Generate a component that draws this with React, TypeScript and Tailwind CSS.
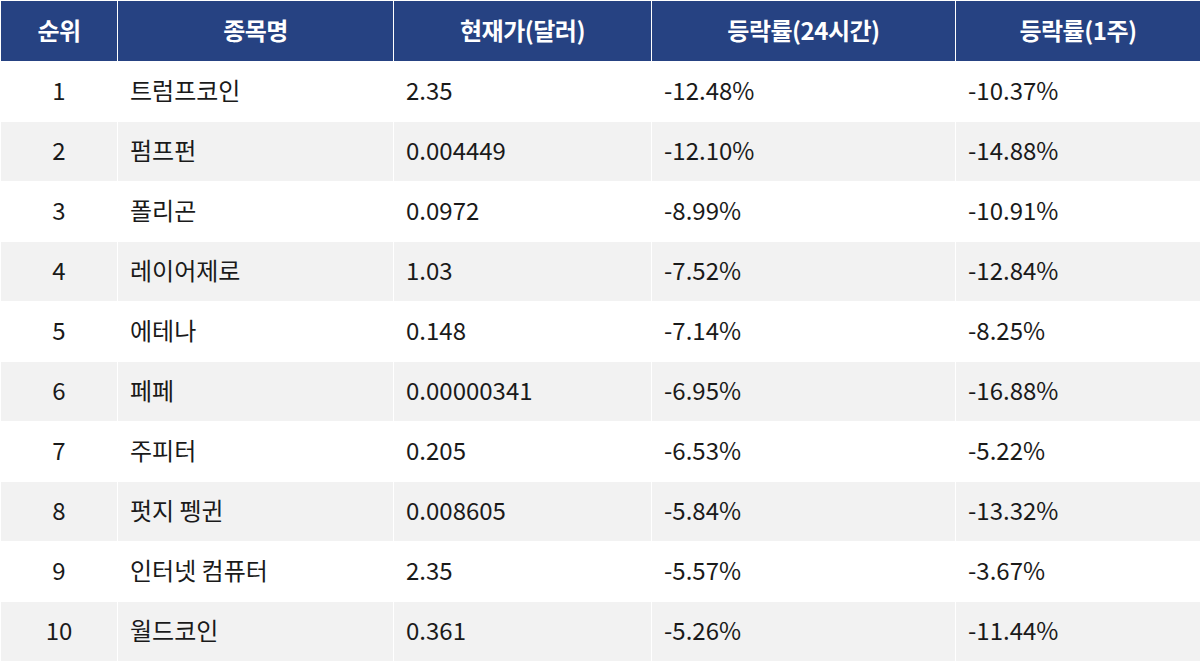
const rows = [
  { rank: 1, name: '트럼프코인', price: '2.35', d24: '-12.48%', w1: '-10.37%' },
  { rank: 2, name: '펌프펀', price: '0.004449', d24: '-12.10%', w1: '-14.88%' },
  { rank: 3, name: '폴리곤', price: '0.0972', d24: '-8.99%', w1: '-10.91%' },
  { rank: 4, name: '레이어제로', price: '1.03', d24: '-7.52%', w1: '-12.84%' },
  { rank: 5, name: '에테나', price: '0.148', d24: '-7.14%', w1: '-8.25%' },
  { rank: 6, name: '페페', price: '0.00000341', d24: '-6.95%', w1: '-16.88%' },
  { rank: 7, name: '주피터', price: '0.205', d24: '-6.53%', w1: '-5.22%' },
  { rank: 8, name: '펏지 펭귄', price: '0.008605', d24: '-5.84%', w1: '-13.32%' },
  { rank: 9, name: '인터넷 컴퓨터', price: '2.35', d24: '-5.57%', w1: '-3.67%' },
  { rank: 10, name: '월드코인', price: '0.361', d24: '-5.26%', w1: '-11.44%' },
];

const headers = ['순위', '종목명', '현재가(달러)', '등락률(24시간)', '등락률(1주)'];

export default function App() {
  return (
    <div className="w-[1200px] h-[661px] bg-white font-['Noto_Sans_CJK_KR',sans-serif]">
      <table className="w-full table-fixed border-collapse">
        <colgroup>
          <col className="w-[117px]" />
          <col className="w-[276px]" />
          <col className="w-[258px]" />
          <col className="w-[304px]" />
          <col className="w-[245px]" />
        </colgroup>
        <thead>
          <tr className="h-[61px] bg-[#264282]">
            {headers.map((h) => (
              <th
                key={h}
                className="border border-white pb-[2px] text-center text-[24px] font-bold text-white tracking-[-0.5px]"
              >
                {h}
              </th>
            ))}
          </tr>
        </thead>
        <tbody>
          {rows.map((r, i) => (
            <tr key={r.rank} className={`h-[60px] text-[24px] text-[#1a1a1a] ${i % 2 ? 'bg-[#f2f2f2]' : 'bg-white'}`}>
              <td className="border border-white pb-[3px] text-center">{r.rank}</td>
              <td className="border border-white pb-[3px] pl-3">{r.name}</td>
              <td className="border border-white pb-[3px] pl-3">{r.price}</td>
              <td className="border border-white pb-[3px] pl-3">{r.d24}</td>
              <td className="border border-white pb-[3px] pl-3">{r.w1}</td>
            </tr>
          ))}
        </tbody>
      </table>
    </div>
  );
}
